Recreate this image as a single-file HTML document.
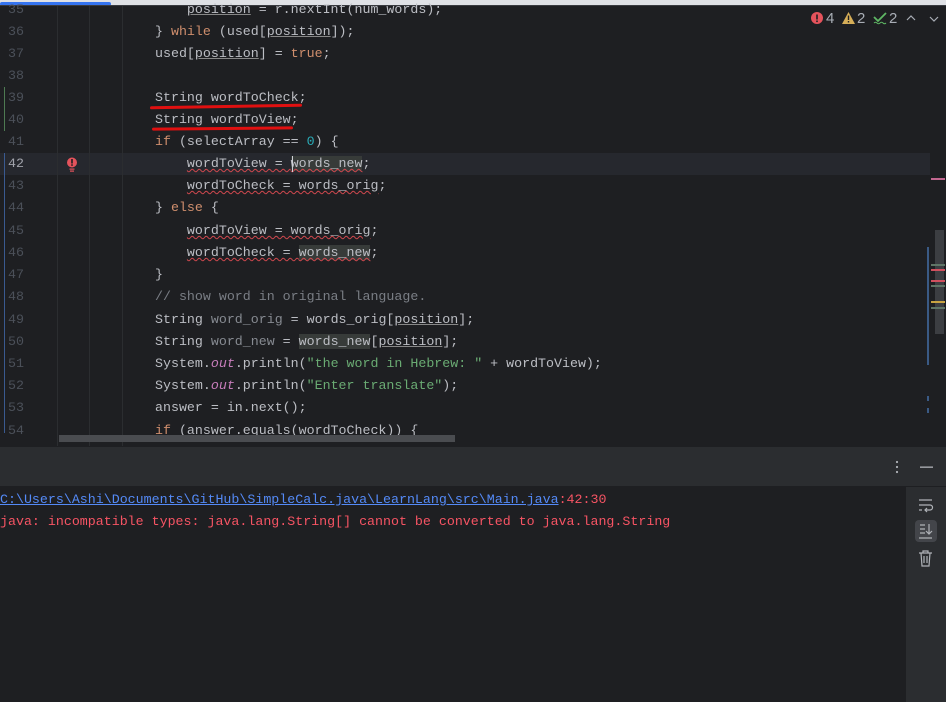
<!DOCTYPE html><html><head><style>
body{margin:0;width:946px;height:702px;background:#1e1f22;overflow:hidden;position:relative;font-family:"Liberation Mono",monospace;font-size:13.3px;color:#bcbec4}
.l{position:absolute;left:0;height:22px;line-height:22px;white-space:pre;width:930px;margin-top:1px}
.n{position:absolute;left:0;width:24px;text-align:right;color:#4b5059}
.c{position:absolute;left:155px}
.k{color:#cf8e6d}.num{color:#2aacb8}.s{color:#6aab73}.cm{color:#7a7e85}.g{color:#868a91}.o{color:#c77dbb;font-style:italic}
.u{text-decoration:underline;text-decoration-color:#888}
.w{text-decoration:underline wavy #d0484e;text-decoration-thickness:1px}
.h{background:#373b39}
.red{position:absolute;height:3px;background:#e01010;border-radius:2px}
</style></head><body>
<div style="position:absolute;left:0;top:0;width:946px;height:5px;background:#dfe1e5"></div>
<div style="position:absolute;left:0;top:2px;width:111px;height:4px;background:#3574f0;border-radius:2px"></div>
<div style="position:absolute;left:0;top:5px;width:946px;height:1px;background:#393b40"></div>
<div style="position:absolute;left:0;top:153px;width:930px;height:22px;background:#26282e"></div>
<div style="position:absolute;left:57px;top:6px;width:1px;height:440px;background:#2b2d30"></div>
<div style="position:absolute;left:89px;top:6px;width:1px;height:440px;background:#2b2d30"></div>
<div style="position:absolute;left:122px;top:6px;width:1px;height:440px;background:#2b2d30"></div>
<div style="position:absolute;left:4px;top:87px;width:1px;height:44px;background:#4e7a52"></div>
<div style="position:absolute;left:4px;top:153px;width:1px;height:280px;background:#3a5a90"></div>
<div class="l" style="top:-2px"><span class="n">35</span><span class="c">    <span class="u">position</span> = r.nextInt(num_words);</span></div>
<div class="l" style="top:20px"><span class="n">36</span><span class="c">} <span class="k">while</span> (used[<span class="u">position</span>]);</span></div>
<div class="l" style="top:42px"><span class="n">37</span><span class="c">used[<span class="u">position</span>] = <span class="k">true</span>;</span></div>
<div class="l" style="top:64px"><span class="n">38</span></div>
<div class="l" style="top:86px"><span class="n">39</span><span class="c">String wordToCheck;</span></div>
<div class="l" style="top:108px"><span class="n">40</span><span class="c">String wordToView;</span></div>
<div class="l" style="top:130px"><span class="n">41</span><span class="c"><span class="k">if</span> (selectArray == <span class="num">0</span>) {</span></div>
<div class="l" style="top:152px"><span class="n" style="color:#a1a3ab">42</span><span class="c">    <span class="w">wordToView = <span class="h">words_new</span></span>;</span></div>
<div class="l" style="top:174px"><span class="n">43</span><span class="c">    <span class="w">wordToCheck = words_orig</span>;</span></div>
<div class="l" style="top:196px"><span class="n">44</span><span class="c">} <span class="k">else</span> {</span></div>
<div class="l" style="top:219px"><span class="n">45</span><span class="c">    <span class="w">wordToView = words_orig</span>;</span></div>
<div class="l" style="top:241px"><span class="n">46</span><span class="c">    <span class="w">wordToCheck = <span class="h">words_new</span></span>;</span></div>
<div class="l" style="top:263px"><span class="n">47</span><span class="c">}</span></div>
<div class="l" style="top:285px"><span class="n">48</span><span class="c cm">// show word in original language.</span></div>
<div class="l" style="top:308px"><span class="n">49</span><span class="c">String <span class="g">word_orig</span> = words_orig[<span class="u">position</span>];</span></div>
<div class="l" style="top:330px"><span class="n">50</span><span class="c">String <span class="g">word_new</span> = <span class="h">words_new</span>[<span class="u">position</span>];</span></div>
<div class="l" style="top:352px"><span class="n">51</span><span class="c">System.<span class="o">out</span>.println(<span class="s">"the word in Hebrew: "</span> + wordToView);</span></div>
<div class="l" style="top:374px"><span class="n">52</span><span class="c">System.<span class="o">out</span>.println(<span class="s">"Enter translate"</span>);</span></div>
<div class="l" style="top:396px"><span class="n">53</span><span class="c">answer = in.next();</span></div>
<div class="l" style="top:419px"><span class="n">54</span><span class="c"><span class="k">if</span> (answer.equals(wordToCheck)) {</span></div>
<svg style="position:absolute;left:66px;top:157px" width="12" height="16"><circle cx="6" cy="5.5" r="5" fill="#e5535c"/><rect x="5.2" y="2" width="1.6" height="4.5" fill="#1e1f22"/><rect x="5.2" y="7.3" width="1.6" height="1.5" fill="#1e1f22"/><rect x="3.5" y="11.5" width="5" height="1.2" fill="#e5535c"/><rect x="4" y="13.5" width="4" height="1.2" fill="#e5535c"/></svg>
<div class="red" style="left:150px;top:105px;width:152px;transform:rotate(-1deg)"></div>
<div class="red" style="left:152px;top:127px;width:141px;transform:rotate(-0.5deg)"></div>
<div style="position:absolute;left:292px;top:156px;width:1px;height:16px;background:#ced0d6"></div>
<svg style="position:absolute;left:811px;top:12px" width="12" height="12"><circle cx="6" cy="6" r="6" fill="#e5535c"/><rect x="5.2" y="2.5" width="1.6" height="5" fill="#1e1f22"/><rect x="5.2" y="8.5" width="1.6" height="1.6" fill="#1e1f22"/></svg>
<div style="position:absolute;left:826px;top:10px;font:15px 'Liberation Sans';color:#a8adb5">4</div>
<svg style="position:absolute;left:842px;top:12px" width="13" height="12"><path d="M6.5 0 L13 12 L0 12Z" fill="#d6ae58"/><rect x="5.8" y="3.5" width="1.4" height="4.5" fill="#1e1f22"/><rect x="5.8" y="9" width="1.4" height="1.5" fill="#1e1f22"/></svg>
<div style="position:absolute;left:857px;top:10px;font:15px 'Liberation Sans';color:#a8adb5">2</div>
<svg style="position:absolute;left:873px;top:12px" width="14" height="14"><path d="M1 5 L5 9 L13 1" stroke="#5fb865" stroke-width="1.8" fill="none"/><path d="M1 11 q1.5 -1.5 3 0 t3 0 t3 0 t3 0" stroke="#5fb865" fill="none"/></svg>
<div style="position:absolute;left:889px;top:10px;font:15px 'Liberation Sans';color:#a8adb5">2</div>
<svg style="position:absolute;left:906px;top:14px" width="34" height="10"><path d="M1 6 L5 2 L9 6" stroke="#a8adb5" fill="none" stroke-width="1.2"/><path d="M24 3 L28 7 L32 3" stroke="#a8adb5" fill="none" stroke-width="1.2"/></svg>
<div style="position:absolute;left:931px;top:178px;width:14px;height:2px;background:#c2678f"></div>
<div style="position:absolute;left:927px;top:247px;width:2px;height:118px;background:#3a5a85"></div>
<div style="position:absolute;left:935px;top:230px;width:9px;height:104px;background:#3c3e42"></div>
<div style="position:absolute;left:931px;top:264px;width:14px;height:2px;background:#5f7566"></div>
<div style="position:absolute;left:931px;top:269px;width:14px;height:2px;background:#d0505e"></div>
<div style="position:absolute;left:931px;top:280px;width:14px;height:2px;background:#d0505e"></div>
<div style="position:absolute;left:931px;top:285px;width:14px;height:2px;background:#5f7566"></div>
<div style="position:absolute;left:931px;top:301px;width:14px;height:2px;background:#c9a442"></div>
<div style="position:absolute;left:931px;top:307px;width:14px;height:2px;background:#5f7566"></div>
<div style="position:absolute;left:927px;top:396px;width:2px;height:5px;background:#3a5a85"></div>
<div style="position:absolute;left:927px;top:408px;width:2px;height:5px;background:#3a5a85"></div>
<div style="position:absolute;left:59px;top:435px;width:396px;height:7px;background:#4a4c50"></div>
<div style="position:absolute;left:0;top:446px;width:946px;height:40px;background:#2b2d30;border-top:1px solid #1e1f22"></div>
<div style="position:absolute;left:0;top:486px;width:946px;height:1px;background:#1e1f22"></div>
<svg style="position:absolute;left:895px;top:460px" width="40" height="14"><circle cx="2" cy="2" r="1.1" fill="#b0b3b8"/><circle cx="2" cy="7" r="1.1" fill="#b0b3b8"/><circle cx="2" cy="12" r="1.1" fill="#b0b3b8"/><rect x="25" y="6.5" width="13" height="1.3" fill="#b0b3b8"/></svg>
<div style="position:absolute;left:906px;top:487px;width:40px;height:215px;background:#2b2d30"></div>
<div style="position:absolute;left:915px;top:520px;width:22px;height:22px;background:#43454a;border-radius:4px"></div>
<svg style="position:absolute;left:918px;top:498px" width="16" height="70" fill="none" stroke="#b0b3b8" stroke-width="1.2"><path d="M1 2 H14 M1 7 H12 a2.5 2.5 0 0 1 0 5 H7 M9 10 L7 12 L9 14 M1 12 H4"/><path d="M2 27 H7 M2 31 H7 M2 35 H7 M1 40 H14 M11 26 V36 M8 33 L11 36 L14 33"/><path d="M1 55 H14 M5 55 V53 H10 V55 M3 55 L4 68 H11 L12 55 M6 58 V65 M9 58 V65"/></svg>
<div class="l" style="top:488px"><span style="color:#548af7;text-decoration:underline">C:\Users\Ashi\Documents\GitHub\SimpleCalc.java\LearnLang\src\Main.java</span><span style="color:#f75464">:42:30</span></div>
<div class="l" style="top:510px;color:#f75464">java: incompatible types: java.lang.String[] cannot be converted to java.lang.String</div>
</body></html>
